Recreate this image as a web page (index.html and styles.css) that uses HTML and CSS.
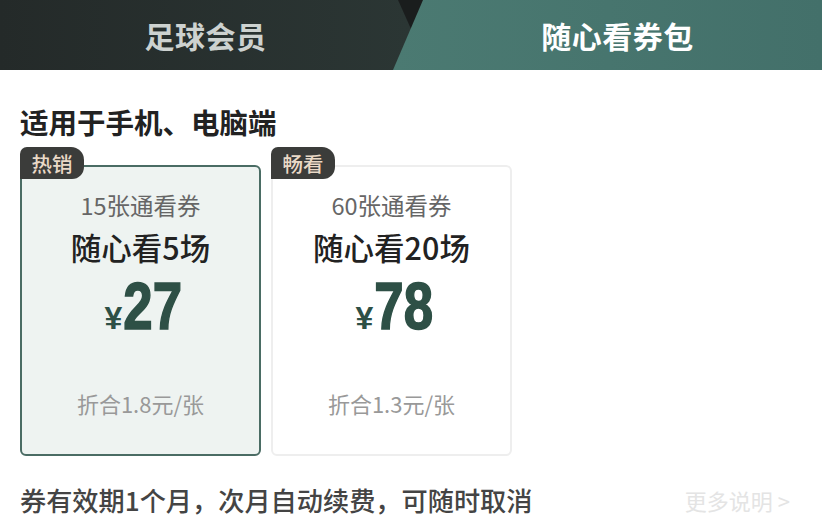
FILE: index.html
```html
<!DOCTYPE html>
<html lang="zh-CN">
<head>
<meta charset="utf-8">
<link rel="stylesheet" href="styles.css">
</head>
<body>
<div class="page">
  <div class="tabs">
    <div class="tab tab-left">足球会员</div>
    <div class="tab tab-right">随心看券包</div>
  </div>
  <div class="content">
    <div class="title">适用于手机、电脑端</div>
    <div class="cards">
      <div class="card card-active">
        <div class="badge">热销</div>
        <div class="sub">15张通看券</div>
        <div class="name">随心看5场</div>
        <div class="price"><span class="yen">¥</span><span class="num">27</span></div>
        <div class="unit">折合1.8元/张</div>
      </div>
      <div class="card">
        <div class="badge">畅看</div>
        <div class="sub">60张通看券</div>
        <div class="name">随心看20场</div>
        <div class="price"><span class="yen">¥</span><span class="num">78</span></div>
        <div class="unit">折合1.3元/张</div>
      </div>
    </div>
    <div class="footer">
      <div class="note">券有效期1个月，次月自动续费，可随时取消</div>
      <div class="more">更多说明 &gt;</div>
    </div>
  </div>
</div>
</body>
</html>
```
FILE: styles.css
```css
* { box-sizing: border-box; }
html, body { margin: 0; padding: 0; background: #fff; }
body {
  width: 822px;
  height: 528px;
  overflow: hidden;
  font-family: "Noto Sans CJK SC", "Noto Sans", sans-serif;
}
.page { width: 822px; height: 528px; }

.tabs {
  display: flex;
  height: 70px;
  background: #1a1d1d;
}
.tab {
  height: 70px;
  display: flex;
  align-items: center;
  justify-content: center;
  font-size: 30px;
  font-weight: 700;
  letter-spacing: 0.5px;
}
.tab-left {
  width: 411px;
  flex: none;
  color: #cdd2d0;
  background: linear-gradient(90deg, #242a29 0%, #2b3634 100%);
  clip-path: polygon(0 0, 398px 0, 411px 29px, 411px 70px, 0 70px);
}
.tab-right {
  flex: 1;
  margin-left: -18px;
  padding-left: 20px;
  color: #ffffff;
  background: linear-gradient(90deg, #4b7a72 0%, #43706a 100%);
  clip-path: polygon(30px 0, 100% 0, 100% 100%, 0 100%);
}

.content { padding: 0 20px; }
.title {
  margin-top: 34px;
  font-size: 28.5px;
  line-height: 36px;
  font-weight: 700;
  color: #222;
}

.cards {
  display: flex;
  gap: 10px;
  margin-top: 25px;
}
.card {
  position: relative;
  width: 241px;
  height: 291px;
  border: 2px solid #eeeeee;
  border-radius: 6px;
  background: #fff;
  display: flex;
  flex-direction: column;
  align-items: center;
  padding-top: 23px;
}
.card-active {
  border-color: #4a6c64;
  background: #eef3f1;
}
.badge {
  position: absolute;
  top: -20px;
  left: -2px;
  width: 64px;
  height: 32px;
  background: #3b3c3a;
  color: #ead9c7;
  font-size: 20.5px;
  font-weight: 500;
  line-height: 32px;
  text-align: center;
  border-radius: 7px 13px 12px 0;
}
.sub {
  font-size: 23.5px;
  line-height: 30px;
  color: #666;
}
.name {
  margin-top: 9px;
  font-size: 30.5px;
  line-height: 36px;
  color: #222;
  font-weight: 500;
}
.price {
  margin-top: 9px;
  height: 64px;
  display: flex;
  align-items: baseline;
  padding-left: 6px;
  color: #2e5046;
}
.yen {
  font-family: "Liberation Sans", sans-serif;
  font-size: 32px;
  font-weight: 700;
  line-height: 64px;
  margin-right: 1px;
}
.num {
  display: inline-block;
  font-family: "Liberation Sans", sans-serif;
  font-size: 66px;
  font-weight: 700;
  line-height: 64px;
  transform: scaleX(0.8);
  margin: 0 -7px;
  -webkit-text-stroke: 1.6px #2e5046;
}
.unit {
  margin-top: 50px;
  font-size: 22px;
  line-height: 30px;
  color: #999;
}

.footer {
  margin-top: 26px;
  display: flex;
  justify-content: space-between;
  align-items: center;
}
.note {
  font-size: 26.2px;
  line-height: 36px;
  font-weight: 500;
  color: #444;
}
.more {
  font-size: 22px;
  line-height: 36px;
  color: #e4e4e4;
  margin-right: 12px;
}
```
